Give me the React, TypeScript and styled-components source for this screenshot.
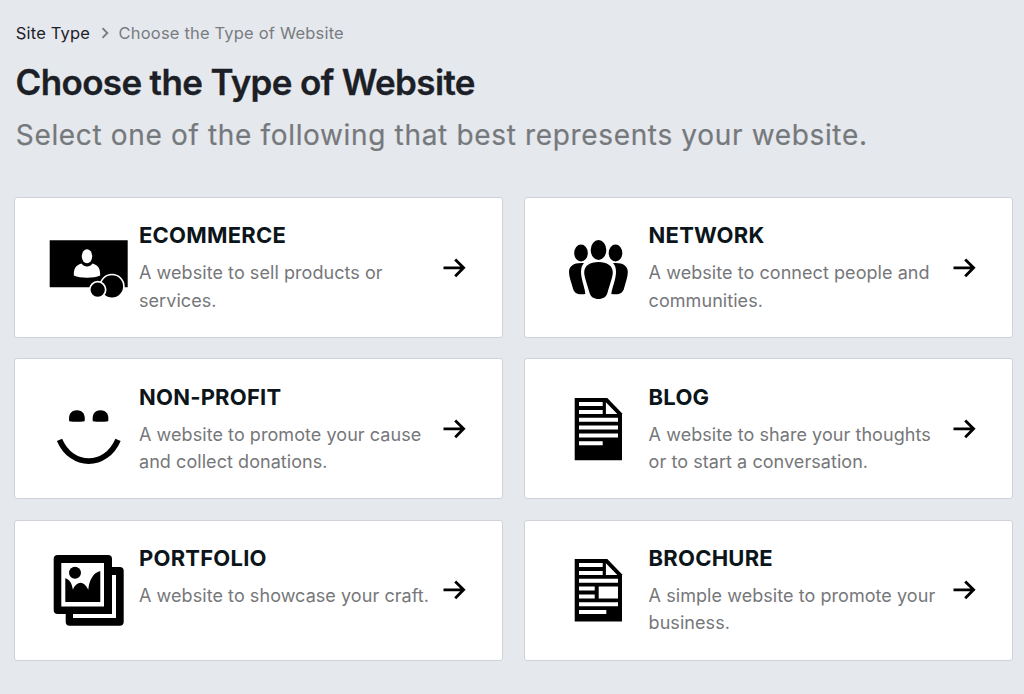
import React from 'react';
import styled, { createGlobalStyle } from 'styled-components';

interface SiteType {
    id: string;
    title: string;
    lines: string[];
    icon: React.ReactNode;
}

const EcommerceIcon = () => (
    <IconSvg viewBox="0 0 100 80">
        <path d="M10.7 12.3H88.7V59.3H10.7Z" />
        <ellipse cx="48" cy="28.3" rx="5.2" ry="7" fill="#fff" />
        <path d="M34.8 47.5C34.8 40.5 36.5 37.5 42.5 35.6C45 39.6 51 39.6 53.5 35.6C59.5 37.5 61.2 40.5 61.2 47.5C55 50.5 41 50.5 34.8 47.5Z" fill="#fff" />
        <circle cx="73" cy="58.4" r="11.9" stroke="#fff" strokeWidth="1.7" />
        <circle cx="58.7" cy="61.7" r="8" stroke="#fff" strokeWidth="1.7" />
    </IconSvg>
);

const NetworkIcon = () => (
    <IconSvg viewBox="0 0 100 80">
        <ellipse cx="49.5" cy="22" rx="7.8" ry="10" />
        <ellipse cx="32" cy="25" rx="6.8" ry="8.5" />
        <ellipse cx="66.5" cy="25" rx="6.8" ry="8.5" />
        <path d="M49.5 34C58 34 63.8 37.5 63.8 44.5C63.8 49 60 59 58.7 64C57.5 69 54 71 49.5 71C45 71 41.5 69 40.3 64C39 59 35.2 49 35.2 44.5C35.2 37.5 41 34 49.5 34Z" />
        <path d="M35 35.2C25 34.5 20 38 20 44C20 49 22.5 55 24 60.5C25.3 65.5 29 67 36.3 66C36 60 32 51 32 44C32 40 33 37 35 35.2Z" />
        <path d="M64 35.2C74 34.5 78.8 38 78.8 44C78.8 49 76.5 55 75 60.5C73.7 65.5 70 67 62.3 66C63 60 67 51 67 44C67 40 66 37 64 35.2Z" />
    </IconSvg>
);

const SmileIcon = () => (
    <IconSvg viewBox="0 0 100 80">
        <path d="M30.2 32.3C29.2 25.5 32 21.2 37.9 21.2C43.8 21.2 46.6 25.5 45.6 32.3Q37.9 33.4 30.2 32.3Z" />
        <path d="M53.8 32.3C52.8 25.5 55.6 21.2 61.5 21.2C67.4 21.2 70.2 25.5 69.2 32.3Q61.5 33.4 53.8 32.3Z" />
        <path d="M20.5 50.8C32.5 79.2 67 79.2 79 50.8" fill="none" stroke="#000" strokeWidth="5.7" />
    </IconSvg>
);

const BlogIcon = () => (
    <IconSvg viewBox="0 0 100 80">
        <path d="M25.7 9H58.3L73 24.3V71.3H25.7Z" />
        <path d="M30 13H53.7V17H30ZM30 21H53.7V25H30ZM30 28.8H69V32.8H30ZM30 36.6H69V40.6H30ZM30 44.4H69V48.4H30ZM30 52.2H53.7V56.2H30ZM56.9 13.2V25H68.3Z" fill="#fff" />
    </IconSvg>
);

const BrochureIcon = () => (
    <IconSvg viewBox="0 0 100 80">
        <path d="M25.7 9H58.3L73 24.3V71.6H25.7Z" />
        <path d="M30 13H53.7V17H30ZM30 21H53.7V25H30ZM30 28.8H69V32.8H30ZM30 36.6H45.7V40.6H30ZM30 44.4H45.7V48.4H30ZM49.7 36.6H69V48.4H49.7ZM30 52.2H69V56.2H30ZM30 60H57.3V64H30ZM56.9 13.2V25H68.3Z" fill="#fff" />
    </IconSvg>
);

const PortfolioIcon = () => (
    <IconSvg viewBox="0 0 100 80">
        <rect x="26.7" y="17" width="58" height="58.7" rx="4" />
        <path d="M73 25H77V68H34V64H73Z" fill="#fff" />
        <rect x="14.7" y="5" width="58.3" height="59" rx="4" />
        <path d="M22.3 13H65V56.5H22.3Z" fill="#fff" />
        <circle cx="36" cy="22.7" r="6" />
        <path d="M26.3 28.3C30.5 29.5 33 33.5 33.8 39.5C38 30.5 45 30.5 49.3 39.7C50 31 54 22.5 61.3 21V52H26.3Z" />
    </IconSvg>
);

const siteTypes: SiteType[] = [
    { id: 'ecommerce', title: 'ECOMMERCE', lines: ['A website to sell products or', 'services.'], icon: <EcommerceIcon /> },
    { id: 'network', title: 'NETWORK', lines: ['A website to connect people and', 'communities.'], icon: <NetworkIcon /> },
    { id: 'non-profit', title: 'NON-PROFIT', lines: ['A website to promote your cause', 'and collect donations.'], icon: <SmileIcon /> },
    { id: 'blog', title: 'BLOG', lines: ['A website to share your thoughts', 'or to start a conversation.'], icon: <BlogIcon /> },
    { id: 'portfolio', title: 'PORTFOLIO', lines: ['A website to showcase your craft.'], icon: <PortfolioIcon /> },
    { id: 'brochure', title: 'BROCHURE', lines: ['A simple website to promote your', 'business.'], icon: <BrochureIcon /> },
];

const App: React.FC = () => {
    return (
        <Page>
            <GlobalStyle />
            <Breadcrumb>
                <BreadcrumbLink href="#">Site Type</BreadcrumbLink>
                <Chevron viewBox="0 0 8 12">
                    <path d="M1.5 1.2L6.3 6L1.5 10.8" />
                </Chevron>
                <span>Choose the Type of Website</span>
            </Breadcrumb>
            <Title>Choose the Type of Website</Title>
            <Subtitle>Select one of the following that best represents your website.</Subtitle>
            <CardGrid>
                {siteTypes.map(({ id, title, lines, icon }) => (
                    <Card key={ id } href={ `#${id}` }>
                        {icon}
                        <CardText>
                            <CardTitle>{title}</CardTitle>
                            {lines.map((line) => (
                                <CardLine key={ line }>{line}</CardLine>
                            ))}
                        </CardText>
                        <Arrow viewBox="0 0 24 24">
                            <path d="M1.5 11.8H21.2M13.2 3.4L21.6 11.8L13.2 20.2" />
                        </Arrow>
                    </Card>
                ))}
            </CardGrid>
        </Page>
    );
};

const GlobalStyle = createGlobalStyle`
    body {
        margin: 0;
        background: #e5e8ed;
        font-family: Inter, "Liberation Sans", sans-serif;
    }

    * {
        box-sizing: border-box;
    }
`;

const Page = styled.main`
    width: 1024px;
    height: 694px;
    padding: 21px 11px 0 14.4px;
    overflow: hidden;
`;

const Breadcrumb = styled.nav`
    display: flex;
    align-items: center;
    height: 24px;
    padding-left: 1.4px;
    font-size: 16.5px;
    letter-spacing: 0.18px;
    color: #797c80;
    white-space: nowrap;
`;

const BreadcrumbLink = styled.a`
    color: #1c2028;
    text-decoration: none;
`;

const Chevron = styled.svg`
    width: 8px;
    height: 12px;
    margin: 0 10px 0 10.5px;
    fill: none;
    stroke: #797c80;
    stroke-width: 1.9;
`;

const Title = styled.h1`
    height: 44px;
    margin: 15px 0 0;
    padding-left: 1.2px;
    font-size: 35px;
    font-weight: 600;
    line-height: 44px;
    letter-spacing: -0.65px;
    color: #1c1f26;
    white-space: nowrap;
    -webkit-text-stroke: 0.3px #1c1f26;
`;

const Subtitle = styled.p`
    height: 36px;
    margin: 13px 0 0;
    padding-left: 1.4px;
    font-size: 28px;
    line-height: 36px;
    letter-spacing: 0.66px;
    color: #76797c;
    white-space: nowrap;
    -webkit-text-stroke: 0.2px #76797c;
`;

const CardGrid = styled.section`
    display: grid;
    grid-template-columns: 489px 489px;
    grid-auto-rows: 141px;
    gap: 20.4px 20.6px;
    margin-top: 44px;
`;

const Card = styled.a`
    display: flex;
    align-items: center;
    padding-left: 23.6px;
    background: #fff;
    border: 1px solid #cfd3d9;
    border-radius: 3px;
    color: #000;
    text-decoration: none;
`;

const IconSvg = styled.svg`
    flex: none;
    width: 100px;
    height: 80px;
`;

const CardText = styled.div`
    align-self: flex-start;
    width: 303px;
    padding-top: 23.2px;
`;

const CardTitle = styled.h2`
    margin: 0 0 10px;
    font-size: 22px;
    font-weight: 700;
    line-height: 28px;
    letter-spacing: 0.22px;
    color: #0b151a;
`;

const CardLine = styled.p`
    margin: 0;
    font-size: 18px;
    line-height: 27.5px;
    letter-spacing: 0.06px;
    color: #76777a;
    white-space: nowrap;
`;

const Arrow = styled.svg`
    flex: none;
    width: 24px;
    height: 24px;
    fill: none;
    stroke: #000;
    stroke-width: 2.8;
`;

export default App;
